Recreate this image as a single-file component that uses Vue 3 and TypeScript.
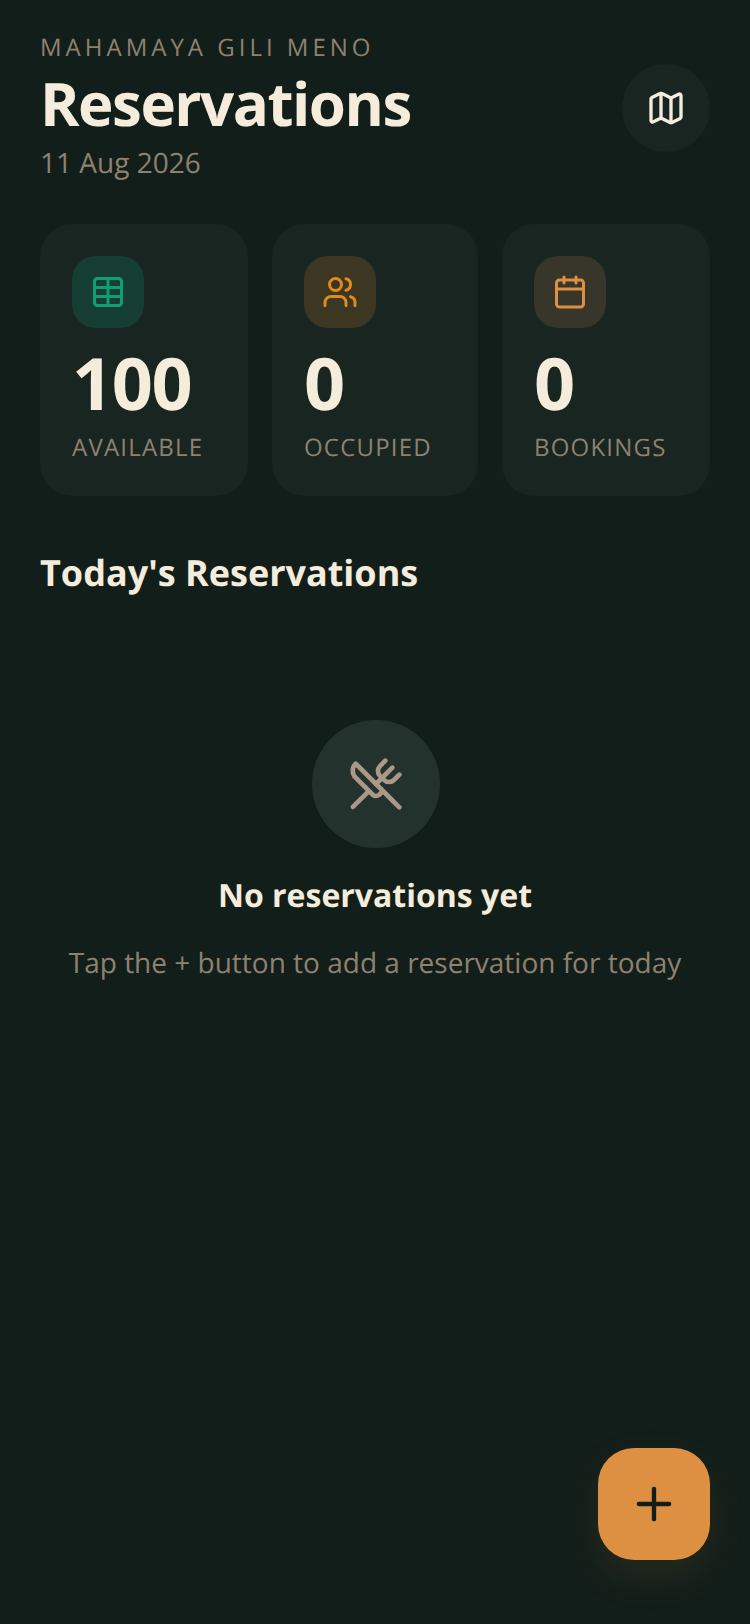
<script setup lang="ts">
interface Stat { value: number; label: string; tone: string }
const stats: Stat[] = [
  { value: 100, label: 'AVAILABLE', tone: 'green' },
  { value: 0, label: 'OCCUPIED', tone: 'amber' },
  { value: 0, label: 'BOOKINGS', tone: 'orange' },
]
</script>

<template>
  <main class="page">
    <header class="header">
      <div class="titles">
        <p class="eyebrow">MAHAMAYA GILI MENO</p>
        <h1 class="title">Reservations</h1>
        <p class="date">11 Aug 2026</p>
      </div>
      <button class="map-btn" aria-label="Map">
        <svg class="map-icon" viewBox="0 0 24 24" fill="none" stroke="currentColor" stroke-width="2" stroke-linecap="round" stroke-linejoin="round">
          <path d="M14.106 5.553a2 2 0 0 0 1.788 0l3.659-1.83A1 1 0 0 1 21 4.619v12.764a1 1 0 0 1-.553.894l-4.553 2.277a2 2 0 0 1-1.788 0l-4.212-2.106a2 2 0 0 0-1.788 0l-3.659 1.83A1 1 0 0 1 3 19.381V6.618a1 1 0 0 1 .553-.894l4.553-2.277a2 2 0 0 1 1.788 0z" />
          <path d="M15 5.764v15" />
          <path d="M9 3.236v15" />
        </svg>
      </button>
    </header>

    <section class="stats">
      <article v-for="s in stats" :key="s.label" class="card">
        <div class="tile" :class="s.tone">
          <svg class="tile-icon" viewBox="0 0 24 24" fill="none" stroke="currentColor" stroke-width="2" stroke-linecap="round" stroke-linejoin="round">
            <template v-if="s.tone === 'green'">
              <path d="M12 3v18" />
              <rect width="18" height="18" x="3" y="3" rx="2" />
              <path d="M3 9h18" />
              <path d="M3 15h18" />
            </template>
            <template v-else-if="s.tone === 'amber'">
              <path d="M16 21v-2a4 4 0 0 0-4-4H6a4 4 0 0 0-4 4v2" />
              <circle cx="9" cy="7" r="4" />
              <path d="M22 21v-2a4 4 0 0 0-3-3.87" />
              <path d="M16 3.13a4 4 0 0 1 0 7.75" />
            </template>
            <template v-else>
              <path d="M8 2v4" />
              <path d="M16 2v4" />
              <rect width="18" height="18" x="3" y="4" rx="2" />
              <path d="M3 10h18" />
            </template>
          </svg>
        </div>
        <div class="value">{{ s.value }}</div>
        <div class="label">{{ s.label }}</div>
      </article>
    </section>

    <h2 class="section-title">Today's Reservations</h2>

    <section class="empty">
      <div class="empty-circle">
        <svg class="empty-icon" viewBox="0 0 24 24" fill="none" stroke="currentColor" stroke-width="2" stroke-linecap="round" stroke-linejoin="round">
          <path d="m16 2-2.3 2.3a3 3 0 0 0 0 4.2l1.8 1.8a3 3 0 0 0 4.2 0L22 8" />
          <path d="M15 15 3.3 3.3a4.2 4.2 0 0 0 0 6l7.3 7.3c.7.7 2 .7 2.8 0L15 15Zm0 0 7 7" />
          <path d="m2.1 21.8 6.4-6.3" />
          <path d="m19 5-7 7" />
        </svg>
      </div>
      <h3 class="empty-title">No reservations yet</h3>
      <p class="empty-text">Tap the + button to add a reservation for today</p>
    </section>

    <button class="fab" aria-label="Add reservation">
      <svg class="fab-icon" viewBox="0 0 24 24" fill="none" stroke="currentColor" stroke-width="2" stroke-linecap="round" stroke-linejoin="round">
        <path d="M5 12h14" />
        <path d="M12 5v14" />
      </svg>
    </button>
  </main>
</template>

<style>
html, body { margin: 0; background: #121e1a; }
</style>

<style scoped>
.page {
  position: relative;
  box-sizing: border-box;
  width: 750px;
  height: 1624px;
  padding: 32px 40px 0;
  background: #121e1a;
  font-family: "Open Sans", sans-serif;
  text-rendering: geometricPrecision;
  color: #f5ecdc;
  overflow: hidden;
}
.header { display: flex; justify-content: space-between; align-items: center; }
.titles { display: flex; flex-direction: column; padding: 1px 0 2px; }
.eyebrow {
  margin: 0;
  font-size: 24px;
  line-height: 30px;
  letter-spacing: 4px;
  color: #8f8170;
}
.title {
  margin: 0;
  font-size: 60px;
  line-height: 81px;
  font-weight: 700;
  letter-spacing: -1.5px;
  color: #f5ecdc;
}
.date {
  margin: 0;
  font-size: 28px;
  line-height: 38px;
  color: #8f8170;
}
.map-btn {
  display: flex;
  align-items: center;
  justify-content: center;
  width: 88px;
  height: 88px;
  padding: 0;
  border: 0;
  border-radius: 50%;
  background: #182521;
  color: #f5ecdc;
}
.map-icon { width: 40px; height: 40px; }
.stats {
  display: grid;
  grid-template-columns: 208fr 206fr 208fr;
  gap: 24px;
  margin-top: 40px;
}
.card {
  box-sizing: border-box;
  height: 272px;
  padding: 32px;
  border-radius: 32px;
  background: #182521;
}
.tile {
  display: flex;
  align-items: center;
  justify-content: center;
  width: 72px;
  height: 72px;
  border-radius: 24px;
}
.tile-icon { width: 36px; height: 36px; }
.tile.green { background: #163e33; color: #10a070; }
.tile.amber { background: #3c3722; color: #e08a1c; }
.tile.orange { background: #38352a; color: #dd8f42; }
.value {
  margin-top: 7px;
  font-size: 72px;
  line-height: 97px;
  font-weight: 700;
  letter-spacing: -1.44px;
  color: #f5ecdc;
}
.label {
  font-size: 24px;
  line-height: 32px;
  letter-spacing: 1.2px;
  color: #8f8170;
}
.section-title {
  margin: 50px 0 0;
  font-size: 36px;
  line-height: 54px;
  font-weight: 700;
  color: #f5ecdc;
}
.empty { display: flex; flex-direction: column; align-items: center; margin-top: 120px; }
.empty-circle {
  display: flex;
  align-items: center;
  justify-content: center;
  width: 128px;
  height: 128px;
  margin-left: 2px;
  border-radius: 50%;
  background: #24322d;
  color: #ab9888;
}
.empty-icon { width: 56px; height: 56px; }
.empty-title {
  margin: 26px 0 0;
  font-size: 32px;
  line-height: 44px;
  font-weight: 700;
  color: #f5ecdc;
}
.empty-text {
  margin: 25px 0 0;
  font-size: 28px;
  line-height: 40px;
  color: #8f8170;
}
.fab {
  position: absolute;
  right: 40px;
  bottom: 64px;
  display: flex;
  align-items: center;
  justify-content: center;
  width: 112px;
  height: 112px;
  padding: 0;
  border: 0;
  border-radius: 36px;
  background: #dd8f42;
  color: #131e1b;
  box-shadow: 0 16px 40px rgba(221, 143, 66, 0.1);
}
.fab-icon { width: 52px; height: 52px; }
</style>
